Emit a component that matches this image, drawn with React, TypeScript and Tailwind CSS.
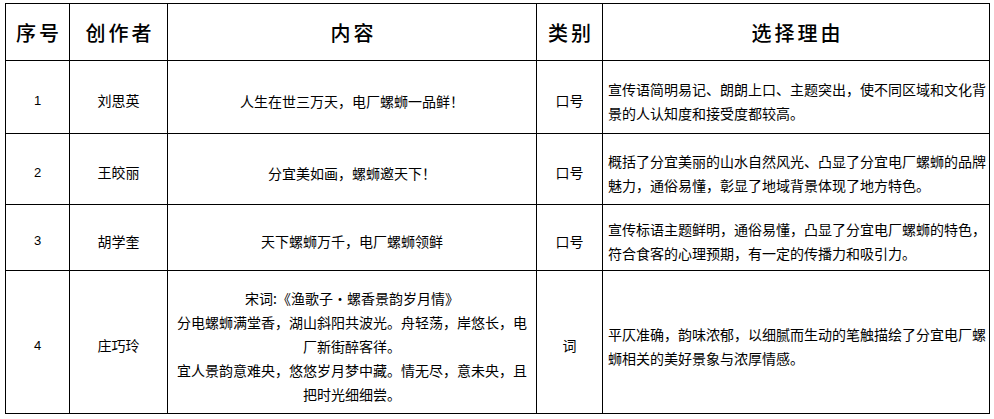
const rows = [
  {
    no: '1',
    author: '刘思英',
    content: ['人生在世三万天，电厂螺蛳一品鲜！'],
    type: '口号',
    reason: '宣传语简明易记、朗朗上口、主题突出，使不同区域和文化背景的人认知度和接受度都较高。',
    h: 'h-[72px]',
  },
  {
    no: '2',
    author: '王皎丽',
    content: ['分宜美如画，螺蛳邀天下！'],
    type: '口号',
    reason: '概括了分宜美丽的山水自然风光、凸显了分宜电厂螺蛳的品牌魅力，通俗易懂，彰显了地域背景体现了地方特色。',
    h: 'h-[70px]',
  },
  {
    no: '3',
    author: '胡学奎',
    content: ['天下螺蛳万千，电厂螺蛳领鲜'],
    type: '口号',
    reason: '宣传标语主题鲜明，通俗易懂，凸显了分宜电厂螺蛳的特色，符合食客的心理预期，有一定的传播力和吸引力。',
    h: 'h-[65px]',
  },
  {
    no: '4',
    author: '庄巧玲',
    content: [
      '宋词:《渔歌子·螺香景韵岁月情》',
      '分电螺蛳满堂香，湖山斜阳共波光。舟轻荡，岸悠长，电厂新街醉客徉。',
      '宜人景韵意难央，悠悠岁月梦中藏。情无尽，意未央，且把时光细细尝。',
    ],
    type: '词',
    reason: '平仄准确，韵味浓郁，以细腻而生动的笔触描绘了分宜电厂螺蛳相关的美好景象与浓厚情感。',
    h: 'h-[142px]',
  },
];

const headers = ['序号', '创作者', '内容', '类别', '选择理由'];

export default function App() {
  return (
    <div className="w-[994px] h-[419px] bg-white pt-[3px] pl-[5px] text-black" style={{ fontFamily: '"Noto Sans CJK SC", sans-serif' }}>
      <div className="inline-grid grid-cols-[63px_97px_368px_65px_386px] gap-px bg-black p-px">
        {headers.map((h) => (
          <div key={h} className="h-[56px] bg-white flex items-center justify-center text-[20px] font-medium tracking-[3px] pl-[3px] pt-[2px]">
            {h}
          </div>
        ))}
        {rows.map((r) => (
          <div key={r.no} className="contents">
            <div className={`${r.h} bg-white flex items-center justify-center pt-[7px] text-[13px]`} style={{ fontFamily: '"Liberation Sans", sans-serif' }}>
              {r.no}
            </div>
            <div className={`${r.h} bg-white flex items-center justify-center pt-[7px] text-[14px]`}>{r.author}</div>
            <div className={`${r.h} bg-white flex flex-col items-center justify-center pt-[7px] px-[8px] text-[14px] leading-[24px] text-center`}>
              {r.content.map((c, i) => (
                <p key={i}>{c}</p>
              ))}
            </div>
            <div className={`${r.h} bg-white flex items-center justify-center pt-[7px] text-[14px]`}>{r.type}</div>
            <div className={`${r.h} bg-white flex items-center pt-[7px] pl-[5px] pr-[3px] text-[14px] leading-[24px]`}>
              <p>{r.reason}</p>
            </div>
          </div>
        ))}
      </div>
    </div>
  );
}
